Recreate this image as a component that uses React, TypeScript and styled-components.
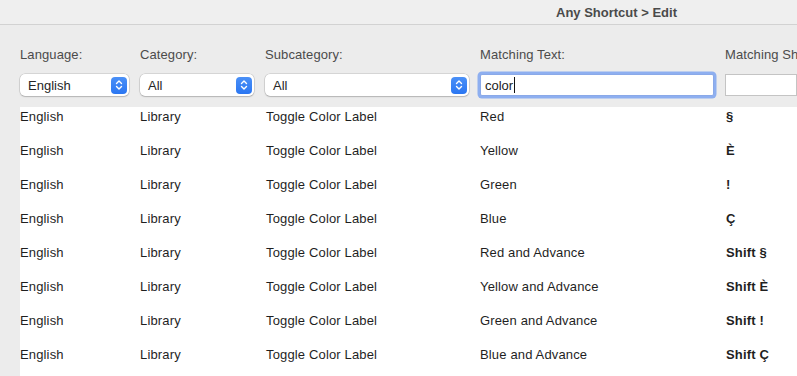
import React from "react";
import styled, { createGlobalStyle } from "styled-components";

const GlobalStyle = createGlobalStyle`
  html, body {
    margin: 0;
    padding: 0;
    background: #ececec;
    font-family: "Liberation Sans", Arial, sans-serif;
    overflow: hidden;
  }
`;

const COLUMNS = "109px 114px 204px 234px 1fr";

const ROWS = [
  { text: "Red", key: "§" },
  { text: "Yellow", key: "È" },
  { text: "Green", key: "!" },
  { text: "Blue", key: "Ç" },
  { text: "Red and Advance", key: "Shift §" },
  { text: "Yellow and Advance", key: "Shift È" },
  { text: "Green and Advance", key: "Shift !" },
  { text: "Blue and Advance", key: "Shift Ç" },
];

const Window = styled.div`
  width: 797px;
  height: 376px;
  display: flex;
  flex-direction: column;
  background: #ececec;
`;

const TitleBar = styled.div`
  height: 24px;
  flex-shrink: 0;
  display: flex;
  align-items: center;
  padding-left: 556px;
  background: #efefef;
  border-bottom: 1px solid #d2d2d2;
  font-size: 13px;
  font-weight: bold;
  color: #4a4a4a;
  box-sizing: content-box;
`;

const Filters = styled.div`
  display: grid;
  grid-template-columns: ${COLUMNS};
  grid-template-rows: 16px 22px;
  column-gap: 11px;
  row-gap: 11px;
  padding: 22px 0 11px 20px;
`;

const Label = styled.div`
  font-size: 13px;
  line-height: 16px;
  color: #4b4b4b;
  white-space: nowrap;
  overflow: hidden;
  letter-spacing: 0.1px;
`;

const Select = styled.div`
  position: relative;
  height: 22px;
  display: flex;
  align-items: center;
  justify-content: space-between;
  padding: 0 2px 0 8px;
  background: #ffffff;
  border-radius: 5px;
  box-shadow: 0 0 0 0.5px rgba(0, 0, 0, 0.18), 0 1px 1.5px rgba(0, 0, 0, 0.16);
  font-size: 13px;
  color: #262626;
`;

const Stepper = styled.div`
  width: 16px;
  height: 17px;
  border-radius: 4px;
  background: linear-gradient(#4a90f7, #2a76f2);
  display: flex;
  align-items: center;
  justify-content: center;
`;

const TextField = styled.div<{ $focused?: boolean }>`
  height: 22px;
  display: flex;
  align-items: center;
  padding-left: 4px;
  background: #ffffff;
  box-sizing: border-box;
  border: 1px solid ${(p) => (p.$focused ? "#8aa9e8" : "#c4c4c4")};
  box-shadow: ${(p) => (p.$focused ? "0 0 0 2.5px #8eaff0" : "none")};
  border-radius: ${(p) => (p.$focused ? "2px" : "0")};
  font-size: 13px;
  color: #222;
`;

const Caret = styled.span`
  display: inline-block;
  width: 1px;
  height: 16px;
  background: #111;
  margin-left: 0.5px;
`;

const Table = styled.div`
  flex: 1;
  margin-left: 20px;
  background: #ffffff;
`;

const Row = styled.div`
  display: grid;
  grid-template-columns: ${COLUMNS};
  column-gap: 11px;
  height: 34px;
`;

const Cell = styled.div<{ $bold?: boolean; $shift?: number }>`
  font-size: 13px;
  line-height: 20px;
  color: #1f1f1f;
  font-weight: ${(p) => (p.$bold ? "bold" : "normal")};
  padding-left: ${(p) => p.$shift ?? 0}px;
  white-space: nowrap;
  letter-spacing: 0.15px;
`;

function Chevrons() {
  return (
    <svg width="8" height="12" viewBox="0 0 8 12" fill="none">
      <path d="M1.5 4.5 L4 2 L6.5 4.5" stroke="#fff" strokeWidth="1.4" strokeLinecap="round" strokeLinejoin="round" />
      <path d="M1.5 7.5 L4 10 L6.5 7.5" stroke="#fff" strokeWidth="1.4" strokeLinecap="round" strokeLinejoin="round" />
    </svg>
  );
}

function PopUp({ value }: { value: string }) {
  return (
    <Select>
      <span>{value}</span>
      <Stepper>
        <Chevrons />
      </Stepper>
    </Select>
  );
}

export default function App() {
  return (
    <>
      <GlobalStyle />
      <Window>
        <TitleBar>Any Shortcut &gt; Edit</TitleBar>
        <Filters>
          <Label>Language:</Label>
          <Label>Category:</Label>
          <Label>Subcategory:</Label>
          <Label>Matching Text:</Label>
          <Label>Matching Shortcut:</Label>
          <PopUp value="English" />
          <PopUp value="All" />
          <PopUp value="All" />
          <TextField $focused>
            color
            <Caret />
          </TextField>
          <TextField />
        </Filters>
        <Table>
          {ROWS.map((row, i) => (
            <Row key={i}>
              <Cell>English</Cell>
              <Cell>Library</Cell>
              <Cell $shift={1}>Toggle Color Label</Cell>
              <Cell>{row.text}</Cell>
              <Cell $bold $shift={1}>
                {row.key}
              </Cell>
            </Row>
          ))}
        </Table>
      </Window>
    </>
  );
}
